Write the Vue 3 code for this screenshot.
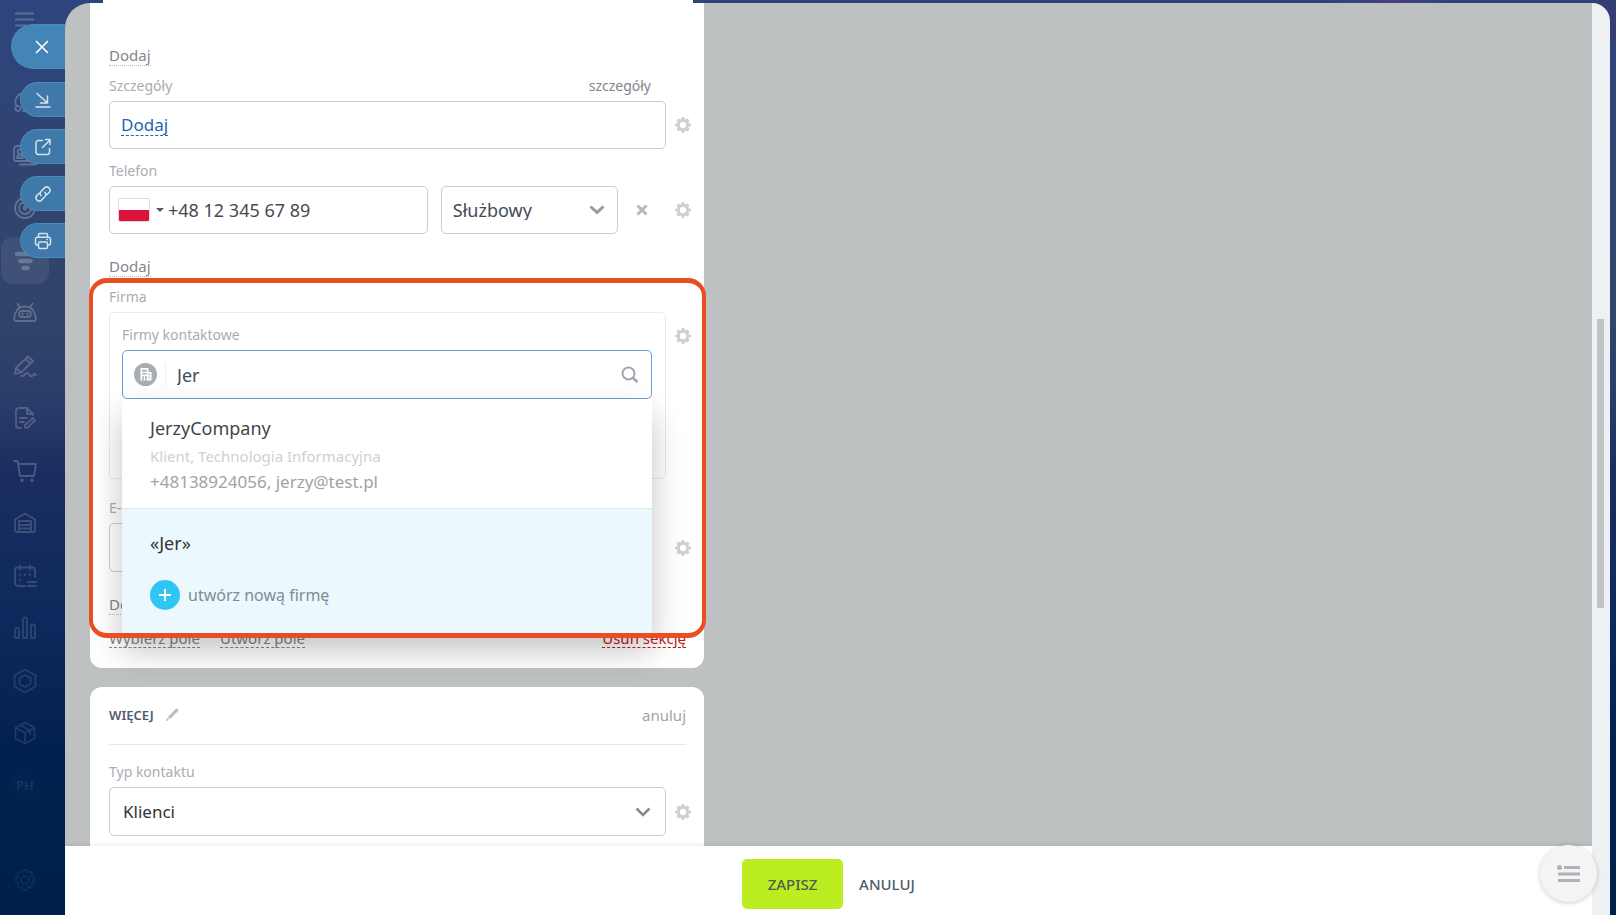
<template>
  <div class="page">
    <nav class="rail" aria-label="Menu główne">
      <button class="rail-menu" type="button" aria-label="Menu">
        <svg width="20" height="15" viewBox="0 0 20 15" fill="none" stroke="currentColor" stroke-width="2">
          <path d="M0 1.5h19M0 7.5h19M0 13.5h12" />
        </svg>
      </button>
      <ul class="rail-list">
        <li v-for="item in railItems" :key="item.name" class="rail-item">
          <a
              href="#"
              class="rail-link"
              :class="{ 'rail-link--active': item.active }"
              :style="{ opacity: item.opacity }"
              :aria-label="item.name"
          >
            <span v-if="item.initials" class="rail-avatar">{{ item.initials }}</span>
            <svg v-else width="24" height="24" viewBox="0 0 24 24" fill="none" stroke="currentColor" :stroke-width="item.stroke || 1.8" stroke-linecap="round" stroke-linejoin="round">
              <path :d="item.d" />
            </svg>
          </a>
        </li>
      </ul>
      <div class="rail-foot">
        <svg width="24" height="24" viewBox="0 0 24 24" fill="none" stroke="currentColor" stroke-width="1.8" stroke-linejoin="round">
          <path d="M10 2h4l.6 2.6 2.3-1.3 2.8 2.8-1.3 2.3L21 9v5l-2.6.9 1.3 2.6-2.4 2.4-2.7-1.3L14 22h-4l-.7-3.4-2.6 1.3-2.4-2.4 1.3-2.6L3 14V9l2.6-.6-1.3-2.3 2.8-2.8 2.3 1.3z" />
          <circle cx="12" cy="12" r="4" />
        </svg>
      </div>
    </nav>

    <div class="panel-tabs">
      <button class="tab tab--close" type="button" aria-label="Zamknij">
        <svg width="14" height="14" viewBox="0 0 14 14" fill="none" stroke="currentColor" stroke-width="1.6" stroke-linecap="round">
          <path d="M1.5 1.5l11 11M12.5 1.5l-11 11" />
        </svg>
      </button>
      <button v-for="tab in tabs" :key="tab.name" class="tab" type="button" :aria-label="tab.name">
        <svg width="18" height="18" viewBox="0 0 18 18" fill="none" stroke="currentColor" stroke-width="1.5" stroke-linecap="round" stroke-linejoin="round">
          <path :d="tab.d" />
        </svg>
      </button>
    </div>

    <main class="panel">
      <div class="panel-main">
        <div class="content">
          <form class="column" @submit.prevent>
            <section class="card card--first">
              <a href="#" class="add-link">Dodaj</a>

              <div class="label-row label-row--first">
                <span class="label">Szczegóły</span>
                <a href="#" class="label-action">szczegóły</a>
              </div>
              <div class="field-row">
                <div class="box"><a href="#" class="box-link">Dodaj</a></div>
                <button class="gear" type="button" aria-label="Ustawienia pola">
                  <svg viewBox="0 0 16 16" width="16" height="16"><path :d="gearPath" fill="currentColor" fill-rule="evenodd" /></svg>
                </button>
              </div>

              <div class="label-row">
                <label class="label" for="phone">Telefon</label>
              </div>
              <div class="field-row">
                <div class="multi">
                  <div class="box box--phone">
                    <button class="country" type="button" aria-label="Polska">
                      <span class="flag"></span>
                      <span class="caret"></span>
                    </button>
                    <input id="phone" v-model="phone" class="input" type="tel" />
                  </div>
                  <div class="box box--select">
                    <select v-model="phoneType" class="select select--muted" aria-label="Typ telefonu">
                      <option>Służbowy</option>
                    </select>
                    <svg class="chevron chevron--light" width="16" height="10" viewBox="0 0 16 10"><path d="M1.5 1.5L8 7.5l6.5-6" fill="none" stroke="currentColor" stroke-width="3" /></svg>
                  </div>
                  <button class="remove" type="button" aria-label="Usuń telefon">
                    <svg width="12" height="12" viewBox="0 0 12 12"><path d="M1.5 1.5l9 9M10.5 1.5l-9 9" stroke="currentColor" stroke-width="3" /></svg>
                  </button>
                </div>
                <button class="gear" type="button" aria-label="Ustawienia pola">
                  <svg viewBox="0 0 16 16" width="16" height="16"><path :d="gearPath" fill="currentColor" fill-rule="evenodd" /></svg>
                </button>
              </div>
              <a href="#" class="add-link add-link--after">Dodaj</a>

              <div class="spotlight">
                <div class="label-row label-row--first">
                  <span class="label">Firma</span>
                </div>
                <div class="field-row field-row--top">
                  <div class="company">
                    <label class="label company-label" for="company">Firmy kontaktowe</label>
                    <div class="search">
                      <span class="search-type">
                        <svg width="23" height="23" viewBox="0 0 23 23">
                          <circle cx="11.5" cy="11.5" r="11.5" fill="#a8adb4" />
                          <path d="M6.500 5h8v4h3v8.500h-11z" fill="#fff" />
                          <path d="M8.300 6.800h4.400v2H8.300zM8.300 10h4.400v1.600H8.300zM8.300 13h1.400v4.500H8.300zM11.200 13h1.500v4.500h-1.500zM14.500 10.700h1.400v1.600h-1.400zM14.500 13.700h1.400v1.600h-1.400z" fill="#a8adb4" />
                        </svg>
                      </span>
                      <input id="company" v-model="query" class="input" type="text" autocomplete="off" />
                      <svg class="search-icon" width="18" height="18" viewBox="0 0 18 18" fill="none" stroke="currentColor" stroke-width="2">
                        <circle cx="7.5" cy="7.5" r="6" />
                        <path d="M11.800 11.800l4.700 4.200" stroke-width="2.600" />
                      </svg>
                      <div class="dropdown">
                        <a href="#" class="result">
                          <span class="result-title">JerzyCompany</span>
                          <span class="result-kind">Klient, Technologia Informacyjna</span>
                          <span class="result-contact">+48138924056, jerzy@test.pl</span>
                        </a>
                        <div class="create">
                          <span class="create-query">«{{ query }}»</span>
                          <button class="create-button" type="button">
                            <span class="plus"></span>
                            utwórz nową firmę
                          </button>
                        </div>
                      </div>
                    </div>
                  </div>
                  <button class="gear gear--top" type="button" aria-label="Ustawienia pola">
                    <svg viewBox="0 0 16 16" width="16" height="16"><path :d="gearPath" fill="currentColor" fill-rule="evenodd" /></svg>
                  </button>
                </div>

                <div class="label-row label-row--mail">
                  <label class="label" for="mail">E-mail</label>
                </div>
                <div class="field-row">
                  <div class="multi">
                    <div class="box box--tall"><input id="mail" class="input" type="email" /></div>
                    <div class="box box--tall box--select">
                      <select v-model="mailType" class="select select--muted" aria-label="Typ adresu e-mail">
                        <option>Służbowy</option>
                      </select>
                    </div>
                    <button class="remove" type="button" aria-label="Usuń e-mail">
                      <svg width="12" height="12" viewBox="0 0 12 12"><path d="M1.5 1.5l9 9M10.5 1.5l-9 9" stroke="currentColor" stroke-width="3" /></svg>
                    </button>
                  </div>
                  <button class="gear" type="button" aria-label="Ustawienia pola">
                    <svg viewBox="0 0 16 16" width="16" height="16"><path :d="gearPath" fill="currentColor" fill-rule="evenodd" /></svg>
                  </button>
                </div>
                <a href="#" class="add-link add-link--after">Dodaj</a>
              </div>

              <div class="section-links">
                <a href="#" class="section-link">Wybierz pole</a>
                <a href="#" class="section-link">Utwórz pole</a>
                <a href="#" class="section-link section-link--danger">Usuń sekcję</a>
              </div>
            </section>

            <section class="card">
              <header class="card-head">
                <h2 class="card-title">WIĘCEJ</h2>
                <button class="edit" type="button" aria-label="Zmień nazwę">
                  <svg width="14" height="14" viewBox="0 0 14 14" fill="currentColor">
                    <path d="M10.800.700a1 1 0 0 1 1.400 0l1 1a1 1 0 0 1 0 1.400L5 11.200 2.700 9zM2 9.800l2.300 2.300L.800 13.200z" />
                  </svg>
                </button>
                <a href="#" class="card-cancel">anuluj</a>
              </header>
              <div class="label-row label-row--type">
                <label class="label" for="type">Typ kontaktu</label>
              </div>
              <div class="field-row">
                <div class="box box--select box--tall">
                  <select id="type" v-model="contactType" class="select">
                    <option>Klienci</option>
                  </select>
                  <svg class="chevron" width="16" height="10" viewBox="0 0 16 10"><path d="M1.5 1.5L8 8l6.500-6.500" fill="none" stroke="currentColor" stroke-width="2.500" /></svg>
                </div>
                <button class="gear" type="button" aria-label="Ustawienia pola">
                  <svg viewBox="0 0 16 16" width="16" height="16"><path :d="gearPath" fill="currentColor" fill-rule="evenodd" /></svg>
                </button>
              </div>
            </section>
          </form>
        </div>

        <footer class="footer">
          <button class="save" type="button">ZAPISZ</button>
          <button class="cancel" type="button">ANULUJ</button>
        </footer>
      </div>
      <div class="scrollbar"><div class="scrollbar-thumb"></div></div>
    </main>

    <button class="float-button" type="button" aria-label="Lista">
      <svg width="24" height="18" viewBox="0 0 24 18" fill="#adb2b8">
        <circle cx="2.5" cy="2.5" r="2.5" />
        <path d="M7 1h16v3H7zM1 7.500h22v3H1zM1 14h22v3H1z" />
      </svg>
    </button>
  </div>
</template>

<script setup>
import { ref } from "vue";

const phone = ref("+48 12 345 67 89");
const phoneType = ref("Służbowy");
const mailType = ref("Służbowy");
const query = ref("Jer");
const contactType = ref("Klienci");

// Eight-tooth gear shared by all field rows
const gearPath =
  "M6.900 0h2.200l.500 2.100 1.200.500L12.600 1.500l1.900 1.900-1.100 1.800.500 1.200 2.100.500v2.200l-2.100.500-.500 1.200 1.100 1.800-1.900 1.900-1.800-1.100-1.200.500L9.100 16H6.900l-.500-2.100-1.200-.500-1.800 1.100-1.900-1.900 1.100-1.800-.500-1.200L0 9.100V6.900l2.100-.500.500-1.200-1.100-1.800 1.900-1.900 1.800 1.100 1.200-.500zM8 4.800a3.200 3.200 0 1 0 0 6.400 3.200 3.200 0 0 0 0-6.400z";

const tabs = [
  { name: "Zwiń", d: "M3 2.500l10.500 9.500M13.500 5v7H6.500M2 16h14" },
  { name: "Otwórz w nowym oknie", d: "M8.500 2.500H4.500a2.500 2.500 0 0 0-2.500 2.500v9a2.500 2.500 0 0 0 2.500 2.500h8.500a2.500 2.500 0 0 0 2.500-2.500V10.500M8.500 9.500L16 2M11.500 1.500H16V6.500" },
  { name: "Kopiuj link", d: "M7.200 10.800a3.200 3.200 0 0 1 0-4.600l3.600-3.600a3.300 3.300 0 0 1 4.600 4.600l-2.600 2.600M10.800 7.200a3.200 3.200 0 0 1 0 4.600l-3.600 3.600a3.300 3.300 0 0 1-4.600-4.600l2.600-2.600" },
  { name: "Drukuj", d: "M4.500 5V2.500a1 1 0 0 1 1-1h7a1 1 0 0 1 1 1V5M4.500 13H3a1.500 1.500 0 0 1-1.500-1.500V7A1.800 1.800 0 0 1 3.300 5.200h11.400A1.800 1.800 0 0 1 16.500 7v4.500A1.500 1.500 0 0 1 15 13h-1.500M6 10h6a1.500 1.500 0 0 1 1.500 1.500V15A1.500 1.500 0 0 1 12 16.500H6A1.500 1.500 0 0 1 4.500 15v-3.500A1.500 1.500 0 0 1 6 10zM13 7.600h.5" },
];

const railItems = [
  { name: "Zadania", opacity: 0.28, d: "M3 14C1 8 5 3 10 2M3 16a2.500 2.500 0 1 0 4 3 2.500 2.500 0 0 0-4-3M10 20h6" },
  { name: "Kontakty", opacity: 0.28, d: "M4 2h14a3 3 0 0 1 3 3v10a2 2 0 0 1-2 2H3a2 2 0 0 1-2-2V5a3 3 0 0 1 3-3zM7 5.500a2 2 0 1 1 0 4.500 2 2 0 0 1 0-4.500M4 14c0-4 6-4 6 0zM7 20.500h16" },
  { name: "Cele", opacity: 0.28, d: "M12 2a10 10 0 1 0 0 20 10 10 0 0 0 0-20M12 6a6 6 0 1 0 0 12 6 6 0 0 0 0-12M12 10.500a1.500 1.500 0 1 0 0 3 1.500 1.500 0 0 0 0-3" },
  { name: "CRM", opacity: 0.32, active: true, stroke: 4.5, d: "M4 5h17M7.500 12h10M10.500 19h4" },
  { name: "Automatyzacja", opacity: 0.26, d: "M3 20C0 20 1.500 15 2.500 12 4 8 7 5.500 12 5.500s8 2.500 9.500 6.500c1 3 2.500 8-.500 8zM4.500 2.500L7 7M19.500 2.500L17 7M9 10h6a3 3 0 0 1 3 3 3 3 0 0 1-3 3H9a3 3 0 0 1-3-3 3 3 0 0 1 3-3M9.500 12.500v1M14.500 12.500v1" },
  { name: "Podpis", opacity: 0.24, d: "M2 20l1-6L15 2.500l5 4.500L8 18.500zM3 14l5 4.500M12.500 5l5 4.500M8 22c4 1 4-4 7-3s0 4 4 3c2 0 1-4 4-1" },
  { name: "Dokumenty", opacity: 0.22, d: "M8 22H6a3 3 0 0 1-3-3V5a3 3 0 0 1 3-3h8l6 6v1M14 2v6h6M7 12h7M7 16h4M12 19l8-7 2 2.500-7.500 7H12z" },
  { name: "Sklep", opacity: 0.24, d: "M1 2h3.500L7 17h14l2-12H5M9 20.500a.800.800 0 1 0 .100 0M19 20.500a.800.800 0 1 0 .100 0" },
  { name: "Magazyn", opacity: 0.19, d: "M2 8.500L12 2.500l10 6V19a2 2 0 0 1-2 2H4a2 2 0 0 1-2-2zM6 21V10h12v11M6 14h12M6 17.500h12" },
  { name: "Kalendarz", opacity: 0.18, d: "M12 22H5a3 3 0 0 1-3-3V6a2.500 2.500 0 0 1 2.500-2.500h15A2.500 2.500 0 0 1 22 6v7M7 1.500v4M17 1.500v4M7 10.500v.5M12 10.500v.5M17 10.500v.5M7 16v.5M15 18h8M15 22h8" },
  { name: "Analityka", opacity: 0.15, d: "M3.500 12h1a1.500 1.500 0 0 1 1.500 1.500V22H2v-8.500A1.500 1.500 0 0 1 3.500 12zM11.500 1.500h1A1.500 1.500 0 0 1 14 3v19h-4V3a1.500 1.500 0 0 1 1.500-1.500zM19.500 8.500h1A1.500 1.500 0 0 1 22 10v12h-4V10a1.500 1.500 0 0 1 1.500-1.500z" },
  { name: "Integracje", opacity: 0.13, d: "M12 .500l10.500 6v11L12 23.500l-10.500-6v-11zM12 6l5.500 3v6L12 18l-5.500-3V9z" },
  { name: "Aplikacje", opacity: 0.12, d: "M12 1.500l9.500 5v11l-9.500 5-9.500-5v-11zM2.500 6.500L12 12l9.500-5.500M12 12v10.500M7 4l10 5.500v4" },
  { name: "Profil", opacity: 0.1, initials: "PH" },
];
</script>

<style>
body {
  margin: 0;
  background: #00204c;
}
</style>

<style scoped>
* {
  box-sizing: border-box;
}
.page {
  position: relative;
  display: flex;
  height: 100vh;
  overflow: hidden;
  padding-right: 6px;
  font-family: "Noto Sans", "Open Sans", sans-serif;
  font-size: 14px;
  line-height: 20px;
  color: #333;
  background:
    linear-gradient(90deg, transparent 82%, rgba(90, 62, 120, .5) 86%, transparent 90%, transparent 95%, rgba(70, 45, 90, .3) 100%) top / 100% 40px no-repeat,
    linear-gradient(180deg, #2e447e 0%, #30446f 22%, #314469 35%, #2a3c6a 44%, #1a2d60 52%, #112b5f 63%, #0a2659 73%, #00204f 83%, #00204b 100%);
}
a {
  color: inherit;
  text-decoration: none;
}
button {
  padding: 0;
  border: none;
  background: none;
  font: inherit;
  color: inherit;
  cursor: pointer;
}
svg {
  display: block;
  flex: none;
}

/* left rail */
.rail {
  flex: none;
  width: 65px;
  display: flex;
  flex-direction: column;
  color: #dfe6f5;
}
.rail-menu {
  flex: none;
  height: 77px;
  padding: 12px 0 0 15px;
  display: flex;
  align-items: flex-start;
  opacity: .25;
}
.rail-list {
  flex: 1;
  margin: 0;
  padding: 0;
  list-style: none;
  display: flex;
  flex-direction: column;
}
.rail-item {
  flex: 1;
  display: flex;
  align-items: center;
  padding-left: 1px;
}
.rail-link {
  width: 48px;
  height: 47px;
  display: flex;
  align-items: center;
  justify-content: center;
  border-radius: 12px;
}
.rail-link--active {
  background: rgba(255, 255, 255, .22);
}
.rail-avatar {
  width: 33px;
  height: 33px;
  border-radius: 50%;
  background: rgba(150, 180, 210, .15);
  font-size: 13px;
  font-weight: 600;
  line-height: 33px;
  text-align: center;
}
.rail-foot {
  height: 103px;
  padding: 56px 0 0 13px;
  opacity: .06;
}

/* buttons hanging on the panel edge */
.panel-tabs {
  position: absolute;
  top: 24px;
  left: 11px;
  width: 54px;
  display: flex;
  flex-direction: column;
  align-items: flex-end;
  gap: 12px;
}
.tab {
  width: 45px;
  height: 35px;
  padding-left: 13px;
  display: flex;
  align-items: center;
  border: 1px solid #4b8abb;
  border-right: none;
  border-radius: 18px 0 0 18px;
  background: #3e79aa;
  color: #d5e2ec;
}
.tab--close {
  width: 54px;
  height: 45px;
  margin-bottom: 1px;
  padding-left: 23px;
  border-radius: 23px 0 0 23px;
  background: #4485b8;
  color: #fff;
}

/* slider panel */
.panel {
  position: relative;
  flex: 1;
  min-width: 0;
  margin-top: 3px;
  display: flex;
}
.panel::before {
  content: "";
  position: absolute;
  top: -3px;
  left: 38px;
  width: 590px;
  height: 3px;
  background: #fff;
}
.panel-main {
  flex: 1;
  min-width: 0;
  display: flex;
  flex-direction: column;
}
.content {
  flex: 1;
  min-height: 0;
  overflow: hidden;
  padding: 0 25px;
  display: grid;
  grid-template-columns: minmax(320px, 614px) minmax(0, 1fr);
  border-top-left-radius: 25px;
  background: #bdc1c2;
}
.column {
  display: flex;
  flex-direction: column;
  gap: 19px;
}
.card {
  padding: 0 13px 20px 19px;
  border-radius: 12px;
  background: #fff;
}
.card--first {
  padding-top: 42px;
  border-radius: 0 0 12px 12px;
}
.add-link {
  display: block;
  width: fit-content;
  border-bottom: 1px dotted #b5b9bf;
  font-size: 15px;
  color: #80868e;
}
.add-link--after {
  margin-top: 22px;
}
.label-row {
  display: flex;
  justify-content: space-between;
  margin: 12px 40px 5px 0;
}
.label-row--first {
  margin-top: 10px;
}
.label-row--mail {
  margin-top: 19px;
}
.label-row--type {
  margin-top: 17px;
}
.label {
  color: #a8adb4;
}
.label-action {
  color: #80868e;
}
.field-row {
  display: flex;
  align-items: center;
  gap: 9px;
}
.field-row--top {
  align-items: flex-start;
}
.box {
  flex: 1;
  min-width: 0;
  height: 48px;
  padding: 0 11px;
  display: flex;
  align-items: center;
  border: 1px solid #c6cdd3;
  border-radius: 5px;
  background: #fff;
}
.box-link {
  border-bottom: 1px dashed #2067b0;
  font-size: 17px;
  line-height: 21px;
  color: #2067b0;
}
.box--tall {
  height: 49px;
}
.box--phone {
  padding: 0 8px;
}
.multi {
  flex: 1;
  min-width: 0;
  display: grid;
  grid-template-columns: minmax(0, 9fr) minmax(0, 5fr) auto;
  align-items: center;
  gap: 13px;
}
.country {
  flex: none;
  display: flex;
  align-items: center;
  gap: 6px;
  margin-right: 4px;
}
.flag {
  width: 32px;
  height: 24px;
  border: 1px solid #dcdcdc;
  border-radius: 2px;
  background: linear-gradient(#fff 50%, #dc143c 50%);
}
.caret {
  border: 4px solid transparent;
  border-top-color: #525c69;
  border-bottom: none;
}
.input {
  flex: 1;
  width: 100%;
  min-width: 0;
  padding: 0;
  border: none;
  outline: none;
  background: none;
  font: inherit;
  font-size: 18px;
  color: #444b55;
}
.box--select {
  position: relative;
  padding: 0;
}
.select {
  width: 100%;
  height: 100%;
  padding: 0 36px 0 13px;
  border: none;
  outline: none;
  appearance: none;
  background: none;
  font: inherit;
  font-size: 17px;
  color: #333;
}
.select--muted {
  padding-left: 11px;
  font-size: 18px;
  color: #444b55;
}
.chevron {
  position: absolute;
  right: 14px;
  color: #828b95;
  pointer-events: none;
}
.chevron--light {
  right: 12px;
  color: #999;
}
.remove {
  width: 22px;
  margin-right: 13px;
  display: flex;
  justify-content: center;
  color: #b9b9b9;
}
.gear {
  flex: none;
  color: #cfcfcf;
}
.gear--top {
  margin-top: 16px;
}

/* company search */
.spotlight {
  position: relative;
}
.spotlight::after {
  content: "";
  position: absolute;
  z-index: 3;
  top: -9px;
  right: -15px;
  bottom: -23px;
  left: -20px;
  border: 5px solid #e84e22;
  border-right-width: 4px;
  border-left-width: 4px;
  border-radius: 18px;
  pointer-events: none;
}
.company {
  flex: 1;
  min-width: 0;
  min-height: 167px;
  padding: 12px 13px 12px 12px;
  border: 1px solid #e9eaec;
  border-radius: 5px;
}
.company-label {
  display: block;
  margin-bottom: 5px;
}
.search {
  position: relative;
  height: 49px;
  padding: 0 12px 0 11px;
  display: flex;
  align-items: center;
  border: 1px solid #6a9fd6;
  border-radius: 5px;
  background: #fff;
}
.search-type {
  margin-right: 11px;
  padding-right: 8px;
  border-right: 1px solid #eef0f2;
}
.search-icon {
  color: #a1a7ae;
}
.dropdown {
  position: absolute;
  z-index: 2;
  top: 48px;
  right: -1px;
  left: -1px;
  background: #fff;
  box-shadow: 0 16px 30px rgba(0, 0, 0, .24);
}
.result {
  display: flex;
  flex-direction: column;
  padding: 17px 28px 14px;
  border-bottom: 1px solid #dfe8ec;
}
.result-title {
  font-size: 18px;
  line-height: 24px;
  color: #41464d;
}
.result-kind {
  margin-top: 6px;
  font-size: 15px;
  color: #cdd0d4;
}
.result-contact {
  margin-top: 4px;
  font-size: 17px;
  line-height: 24px;
  color: #a0a3a8;
}
.create {
  display: flex;
  flex-direction: column;
  align-items: flex-start;
  gap: 25px;
  padding: 22px 28px 24px;
  background: #ebf9ff;
}
.create-query {
  font-size: 18px;
  line-height: 24px;
}
.create-button {
  display: flex;
  align-items: center;
  gap: 8px;
  font-size: 16px;
  color: #828b95;
}
.plus {
  width: 30px;
  height: 30px;
  border-radius: 50%;
  background:
    linear-gradient(#fff, #fff) center / 12px 2px no-repeat,
    linear-gradient(#fff, #fff) center / 2px 12px no-repeat,
    #2fc6f6;
}
.section-links {
  display: flex;
  gap: 20px;
  margin: 15px 5px 0 0;
  font-size: 15px;
  line-height: 17px;
}
.section-link {
  border-bottom: 1px dashed #80868e;
  color: #80868e;
}
.section-link--danger {
  margin-left: auto;
  border-color: #c21b16;
  color: #c21b16;
}

/* second card */
.card-head {
  display: flex;
  align-items: center;
  height: 58px;
  margin-right: 5px;
  padding-bottom: 2px;
  border-bottom: 1px solid #e6e8ea;
}
.card-title {
  margin: 0 11px 0 0;
  font-size: 13px;
  font-weight: 600;
  color: #525c69;
}
.edit {
  color: #bcc0c5;
}
.card-cancel {
  margin-left: auto;
  font-size: 15px;
  color: #a3a3a3;
}

/* footer */
.footer {
  position: relative;
  z-index: 4;
  height: 69px;
  display: flex;
  align-items: center;
  justify-content: center;
  gap: 16px;
  background: #fff;
  box-shadow: 0 -2px 4px rgba(0, 0, 0, .06);
  font-size: 15px;
  font-weight: 500;
}
.save {
  width: 101px;
  height: 50px;
  margin-top: 6px;
  border-radius: 5px;
  background: #bbed21;
  color: #535c50;
}
.cancel {
  margin-top: 6px;
  color: #525c69;
}
.scrollbar {
  position: relative;
  z-index: 5;
  width: 18px;
  padding: 316px 6px 0 5px;
  border-top-right-radius: 18px;
  background: #edf1f4;
}
.scrollbar-thumb {
  height: 289px;
  background: #bfc3c5;
}
.float-button {
  position: absolute;
  z-index: 6;
  right: 19px;
  bottom: 13px;
  width: 57px;
  height: 57px;
  display: flex;
  align-items: center;
  justify-content: center;
  border-radius: 50%;
  background: #f4f4f4;
  box-shadow: 0 1px 5px rgba(0, 0, 0, .2);
}
</style>
